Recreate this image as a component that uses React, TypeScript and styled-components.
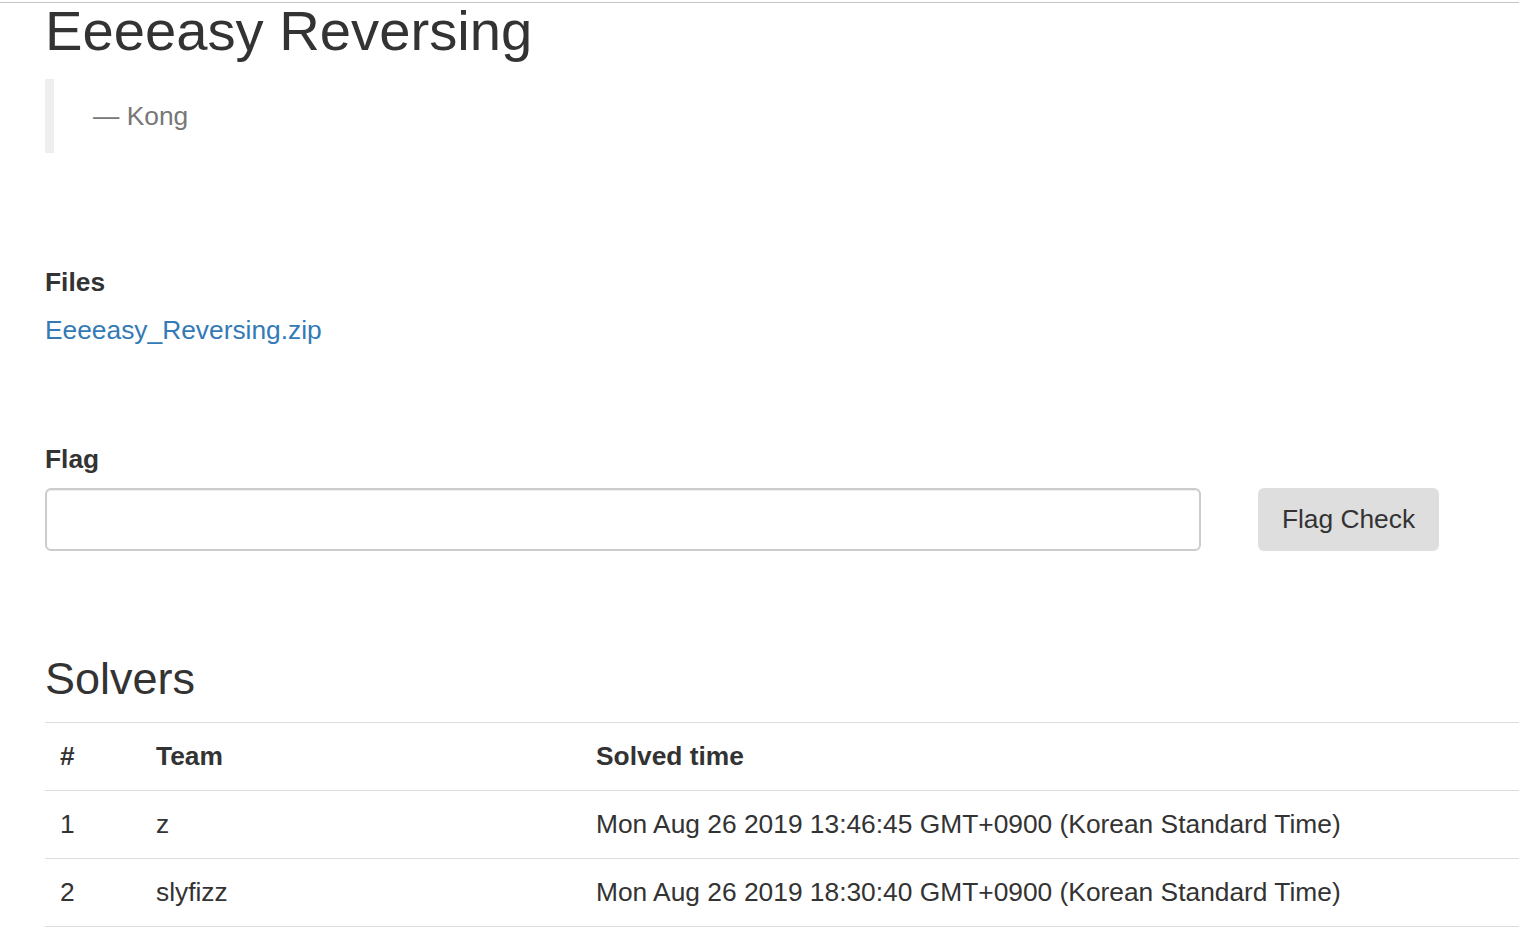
import { FC } from "react";
import styled, { createGlobalStyle } from "styled-components";

const solvers = [
  { rank: 1, team: "z", time: "Mon Aug 26 2019 13:46:45 GMT+0900 (Korean Standard Time)" },
  { rank: 2, team: "slyfizz", time: "Mon Aug 26 2019 18:30:40 GMT+0900 (Korean Standard Time)" },
];

const App: FC = () => {
  return (
    <>
      <GlobalStyle />
      <TopRule />
      <Page>
        <Title>Eeeeasy Reversing</Title>
        <Quote>
          <QuoteFooter>— Kong</QuoteFooter>
        </Quote>

        <SectionLabel $gap={111}>Files</SectionLabel>
        <FileLink href="#">Eeeeasy_Reversing.zip</FileLink>

        <SectionLabel $gap={92}>Flag</SectionLabel>
        <FlagRow>
          <FlagInput type="text" />
          <CheckButton type="button">Flag Check</CheckButton>
        </FlagRow>

        <SectionTitle>Solvers</SectionTitle>
        <SolversTable>
          <colgroup>
            <col style={{ width: 96 }} />
            <col style={{ width: 440 }} />
            <col />
          </colgroup>
          <thead>
            <tr>
              <Th>#</Th>
              <Th>Team</Th>
              <Th>Solved time</Th>
            </tr>
          </thead>
          <tbody>
            {solvers.map((s) => (
              <tr key={s.rank}>
                <Td>{s.rank}</Td>
                <Td>{s.team}</Td>
                <Td>{s.time}</Td>
              </tr>
            ))}
          </tbody>
        </SolversTable>
      </Page>
    </>
  );
};

export default App;

const GlobalStyle = createGlobalStyle`
  body {
    margin: 0;
    background: #fff;
    color: #333;
    font-family: "Liberation Sans", Arial, Helvetica, sans-serif;
    font-size: 26.35px;
    line-height: 1.42857;
    overflow: hidden;
  }
`;

const TopRule = styled.div`
  margin-top: 2px;
  height: 1px;
  background: #c4c4c4;
`;

const Page = styled.div`
  padding-left: 45px;
`;

const Title = styled.h1`
  margin: 0;
  font-size: 56.2px;
  font-weight: 400;
  line-height: 55px;
  color: #333;
`;

const Quote = styled.blockquote`
  margin: 21px 0 0;
  padding: 19px 0 18px 39px;
  border-left: 9px solid #eee;
`;

const QuoteFooter = styled.footer`
  color: #777;
  line-height: 37px;
`;

const SectionLabel = styled.div<{ $gap: number }>`
  margin-top: ${(p) => p.$gap}px;
  font-weight: 700;
  line-height: 37px;
`;

const FileLink = styled.a`
  display: block;
  margin-top: 11px;
  line-height: 37px;
  color: #337ab7;
  text-decoration: none;
`;

const FlagRow = styled.div`
  display: flex;
  align-items: stretch;
  gap: 57px;
  margin-top: 10px;
  height: 63px;
`;

const FlagInput = styled.input`
  box-sizing: border-box;
  width: 1156px;
  height: 100%;
  border: 2px solid #ccc;
  border-radius: 6px;
  box-shadow: inset 0 1px 1px rgba(0, 0, 0, 0.075);
  font: inherit;
  padding: 0 20px;
  outline: none;
`;

const CheckButton = styled.button`
  box-sizing: border-box;
  width: 181px;
  height: 100%;
  border: none;
  border-radius: 6px;
  background: #dedede;
  color: #333;
  font-family: inherit;
  font-size: 26.35px;
  padding: 0;
  cursor: pointer;
`;

const SectionTitle = styled.h2`
  margin: 104px 0 0;
  font-size: 45px;
  font-weight: 400;
  line-height: 48px;
  color: #333;
`;

const SolversTable = styled.table`
  margin-top: 19px;
  width: 100%;
  border-collapse: collapse;
  border-spacing: 0;
  border-bottom: 1px solid #ddd;
`;

const Th = styled.th`
  text-align: left;
  font-weight: 700;
  padding: 15px;
  line-height: 37px;
  border-top: 1px solid #ddd;
`;

const Td = styled.td`
  padding: 15px;
  line-height: 37px;
  border-top: 1px solid #ddd;
  white-space: nowrap;
`;
